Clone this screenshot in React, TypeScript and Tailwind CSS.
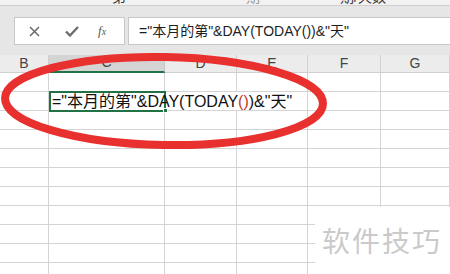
import React from "react"

const cols = [49, 116, 72, 71, 73, 69]
const letters = ["B", "C", "D", "E", "F", "G"]
const rowCount = 11

const font = { fontFamily: '"Liberation Sans", "Noto Sans CJK SC", sans-serif' }

function FormulaBar() {
    return (
        <div className="flex h-[49px] bg-[#e6e6e6] pt-[11px] pb-[5px]">
            <div className="ml-[14px] flex h-[28px] w-[111px] items-center border border-[#c8c8c8] bg-white">
                <span className="ml-[13px] flex w-[12px] justify-center">
                    <svg width="11" height="11" viewBox="0 0 11 11">
                        <path d="M1 1 L10 10 M10 1 L1 10" stroke="#6d6d6d" strokeWidth="1.6" />
                    </svg>
                </span>
                <span className="ml-[25px] flex w-[14px] justify-center">
                    <svg width="14" height="11" viewBox="0 0 14 11">
                        <path d="M1 5.5 L5 9.5 L13 1" stroke="#6d6d6d" strokeWidth="2.4" fill="none" />
                    </svg>
                </span>
                <span className="ml-[19px] font-serif text-[13px] italic text-[#5a5a5a]" style={{ fontFamily: '"Liberation Serif", serif' }}>
                    f<span className="text-[10px]">x</span>
                </span>
            </div>
            <div className="ml-[3px] flex h-[28px] flex-1 items-center border border-[#c8c8c8] border-r-0 bg-white pl-[10px] text-[14px] text-[#1e1e1e]" style={font}>
                ="本月的第"&amp;DAY(TODAY())&amp;"天"
            </div>
        </div>
    )
}

function Grid() {
    return (
        <div className="flex flex-col" style={font}>
            <div className="flex h-[18px]">
                {letters.map((l, i) => (
                    <div
                        key={l}
                        className={
                            i === 1
                                ? "flex items-end justify-center border-r border-b-2 border-r-[#c4c4c4] border-b-[#217346] bg-[#d4d4d4] text-[14px] leading-[17px] text-[#444]"
                                : "flex items-end justify-center border-r border-b border-[#d0d0d0] bg-[#ececec] text-[14px] leading-[17px] text-[#444]"
                        }
                        style={{ width: cols[i] }}
                    >
                        {l}
                    </div>
                ))}
            </div>
            {Array.from({ length: rowCount }).map((_, r) => (
                <div key={r} className="flex h-[19px]">
                    {cols.map((w, c) => {
                        const overflowRow = r === 1
                        const noRight = overflowRow && (c === 2 || c === 1)
                        if (overflowRow && c === 1) {
                            return (
                                <div key={c} className="relative h-[19px] border-b border-[#d4d4d4]" style={{ width: w }}>
                                    <div className="absolute -top-[1px] left-0 h-[21px] w-[117px] border-2 border-[#217346]" />
                                    <div className="absolute right-[-3px] bottom-[-3px] h-[5px] w-[5px] border border-white bg-[#217346]" />
                                    <span className="absolute left-[3px] top-0 whitespace-nowrap text-[16px] leading-[19px] text-[#111]">
                                        ="本月的第"&amp;DAY(TODAY<span className="text-[#c0392b]">()</span>)&amp;"天"
                                    </span>
                                </div>
                            )
                        }
                        return (
                            <div
                                key={c}
                                className={noRight ? "h-[19px] border-b border-[#d4d4d4]" : "h-[19px] border-r border-b border-[#d4d4d4]"}
                                style={{ width: w }}
                            />
                        )
                    })}
                </div>
            ))}
        </div>
    )
}

export default function App() {
    return (
        <div className="relative h-[274px] w-[450px] overflow-hidden bg-white">
            <div className="flex h-[6px] overflow-hidden border-b border-[#cfcfcf] bg-[#f2f2f2] text-[14px] text-[#333]" style={font}>
                <span className="-mt-[13px] ml-[112px]">第</span>
                <span className="-mt-[13px] ml-[120px] text-[#999]">期</span>
                <span className="-mt-[13px] ml-[80px]">期/天数</span>
            </div>
            <FormulaBar />
            <Grid />
            <svg className="pointer-events-none absolute left-0 top-0" width="450" height="274" viewBox="0 0 450 274">
                <ellipse cx="164" cy="101" rx="159" ry="44" fill="none" stroke="#e8302e" strokeWidth="8" transform="rotate(1 164 101)" />
            </svg>
            <div className="absolute right-0 bottom-0 flex h-[67px] w-[135px] items-start bg-white pl-[7px] pt-[17px] text-[28px] leading-[32px] tracking-[2px] text-[#cacaca]" style={{ fontFamily: '"Noto Sans CJK SC", sans-serif' }}>
                软件技巧
            </div>
        </div>
    )
}
